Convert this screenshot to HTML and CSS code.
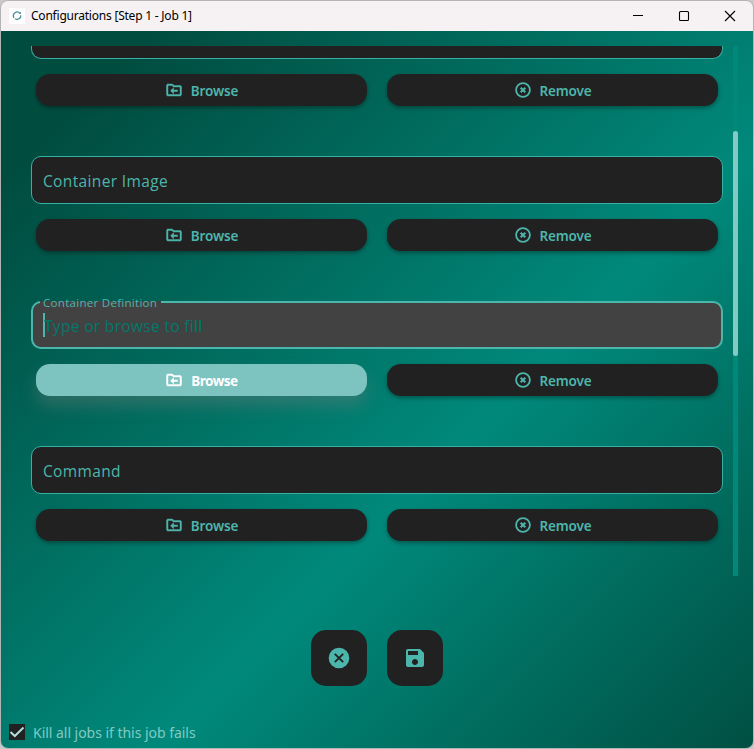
FILE: index.html
```html
<!DOCTYPE html>
<html lang="en">
<head>
<meta charset="utf-8">
<title>Configurations [Step 1 - Job 1]</title>
<link rel="stylesheet" href="styles.css">
</head>
<body>
<svg class="defs" aria-hidden="true">
  <symbol id="folder" viewBox="0 0 24 24"><path d="M20 6h-8l-2-2H4C2.900 4 2 4.900 2 6v12c0 1.100.9 2 2 2h16c1.100 0 2-.9 2-2V8c0-1.100-.9-2-2-2zm0 12H4V6h5.170l2 2H20v10z" stroke="currentColor" stroke-width=".6"/><path d="M11.700 8.300L7 13l4.700 4.700v-3.400H17v-2.600h-5.300z"/></symbol>
  <symbol id="remove" viewBox="0 0 24 24"><circle cx="12" cy="12" r="9.200" fill="none" stroke="currentColor" stroke-width="2.400"/><path d="M8.900 8.900l6.200 6.200M15.100 8.900l-6.200 6.200" stroke="currentColor" stroke-width="2.700"/></symbol>
</svg>
<div class="window">
  <header class="titlebar">
    <span class="app-icon"><svg viewBox="0 0 16 16"><path d="M11 5.200A3.800 3.800 0 0 0 5 9.800M6 10.700A3.800 3.800 0 0 0 11.800 7.200" fill="none" stroke="#458e99" stroke-width="1.300"/><path d="M9.800 5.800h2.200V3.800z" fill="#397b87"/></svg></span>
    <span class="title">Configurations [Step 1 - Job 1]</span>
    <div class="controls">
      <svg viewBox="0 0 12 12"><path d="M1 5.500h10"/></svg>
      <svg viewBox="0 0 12 12"><rect x="1.500" y="1.500" width="9" height="9" rx="1"/></svg>
      <svg viewBox="0 0 12 12"><path d="M1 1l10 10M11 1L1 11"/></svg>
    </div>
  </header>
  <main class="page">
    <div class="scroller">
      <section class="group clipped">
        <div class="field"></div>
        <div class="actions"><button class="btn"><svg><use href="#folder"/></svg>Browse</button><button class="btn"><svg><use href="#remove"/></svg>Remove</button></div>
      </section>
      <section class="group">
        <div class="field">Container Image</div>
        <div class="actions"><button class="btn"><svg><use href="#folder"/></svg>Browse</button><button class="btn"><svg><use href="#remove"/></svg>Remove</button></div>
      </section>
      <section class="group">
        <div class="field focused"><span class="caption">Container Definition</span><span class="hint">Type or browse to fill</span></div>
        <div class="actions"><button class="btn hover"><svg><use href="#folder"/></svg>Browse</button><button class="btn"><svg><use href="#remove"/></svg>Remove</button></div>
      </section>
      <section class="group">
        <div class="field">Command</div>
        <div class="actions"><button class="btn"><svg><use href="#folder"/></svg>Browse</button><button class="btn"><svg><use href="#remove"/></svg>Remove</button></div>
      </section>
      <div class="track"><div class="thumb"></div></div>
    </div>
    <div class="footer-actions">
      <button class="fab" aria-label="Cancel"><svg viewBox="0 0 24 24"><circle cx="12" cy="12" r="10.300"/><path d="M7.800 7.800l8.400 8.400M16.200 7.800l-8.400 8.400" stroke="#212121" stroke-width="1.900"/></svg></button>
      <button class="fab" aria-label="Save"><svg viewBox="0 0 24 24"><path d="M17 3H5c-1.110 0-2 .9-2 2v14c0 1.100.89 2 2 2h14c1.100 0 2-.9 2-2V7l-4-4zm-5 16c-1.660 0-3-1.340-3-3s1.340-3 3-3 3 1.340 3 3-1.340 3-3 3zm3-10H5V5h10v4z"/></svg></button>
    </div>
    <div class="check"><span class="box"><svg viewBox="0 0 16 16"><path d="M1.500 8l4.300 4L14.500 3.500"/></svg></span><span class="check-label">Kill all jobs if this job fails</span></div>
  </main>
</div>
</body>
</html>
```
FILE: styles.css
```css
* { box-sizing: border-box; }
body { margin: 0; height: 749px; overflow: hidden; background: #c9c9c9; font-family: "Noto Sans", "Open Sans", sans-serif; }
.defs { position: absolute; width: 0; height: 0; }
.window { width: 754px; height: 749px; border: 1px solid #b4b4b4; border-radius: 8px; overflow: hidden; }
.titlebar { height: 30px; display: flex; align-items: center; background: #f6f1f2; padding-left: 8px; color: #000; }
.app-icon { width: 16px; height: 16px; background: #fff; }
.app-icon svg { display: block; width: 16px; height: 16px; }
.title { margin-left: 6px; font-size: 12px; line-height: 30px; letter-spacing: -.22px; }
.controls { margin-left: auto; display: flex; gap: 34px; padding-right: 17px; }
.controls svg { width: 12px; height: 12px; fill: none; stroke: #000; stroke-width: 1.100; }
.page { height: 717px; padding-top: 15px; background: linear-gradient(135deg, #004d40 10.500%, #00897b 59.500%, #004d40 102%); }
.scroller { position: relative; height: 530px; padding: 0 30px; }
.group { height: 145px; }
.field { height: 48px; border: 1px solid #35b0a3; border-radius: 10px; background: #212121; color: #4db6ac; padding: 0 11px; font-family: "Open Sans", "Noto Sans", sans-serif; font-size: 15.500px; line-height: 49px; letter-spacing: .36px; }
.clipped { height: 110px; }
.clipped .field { height: 13px; border-top: 0; border-radius: 0 0 10px 10px; }
.focused { position: relative; border: 2px solid #4db6ac; background: #424242; padding: 0 10px; color: #00796b; }
.caption { position: absolute; left: 7px; top: -8px; width: 121px; white-space: nowrap; padding: 0 4px 0 3px; font-size: 11.600px; line-height: 16px; letter-spacing: .25px; color: #4db6ac; background: linear-gradient(transparent 6px, #424242 6px); }
.hint { display: block; border-left: 2px solid #4db6ac; height: 24px; line-height: 26px; margin-top: 10px; text-indent: -1px; letter-spacing: .33px; }
.actions { display: grid; grid-template-columns: 1fr 1fr; gap: 20px; padding: 15px 5px 0; }
.btn { height: 32px; border: 0; border-radius: 14px; background: #212121; color: #4db6ac; font: 600 13.500px/20px "Noto Sans", "Open Sans", sans-serif; letter-spacing: -.15px; display: flex; align-items: center; justify-content: center; gap: 8px; padding: 1px 0 0; box-shadow: 0 2px 4px rgba(0,0,0,.35); }
.btn svg { width: 18px; height: 18px; margin-top: -1px; fill: currentColor; }
.hover { background: #7dc3c0; color: #fff; font-weight: 700; letter-spacing: -.5px; box-shadow: 0 10px 16px rgba(125,125,125,.35); }
.track { position: absolute; left: 732px; top: 0; width: 5px; height: 530px; background: #00897b; }
.thumb { height: 225px; margin-top: 85px; background: #80cbc4; border-radius: 3px; }
.footer-actions { display: flex; justify-content: center; gap: 20px; margin-top: 54px; }
.fab { width: 56px; height: 56px; padding: 0; border: 0; border-radius: 15px; background: #212121; color: #4db6ac; display: grid; place-items: center; }
.fab svg { width: 24px; height: 24px; fill: currentColor; }
.check { display: flex; align-items: center; gap: 8px; margin: 36px 0 0 8px; color: #80cbc4; font-size: 14px; line-height: 20px; }
.check-label { letter-spacing: -.03px; padding-top: 1px; }
.box { width: 16px; height: 16px; margin-top: -1px; background: #212121; }
.box svg { display: block; width: 16px; height: 16px; fill: none; stroke: #b2dfdb; stroke-width: 2; }
```
